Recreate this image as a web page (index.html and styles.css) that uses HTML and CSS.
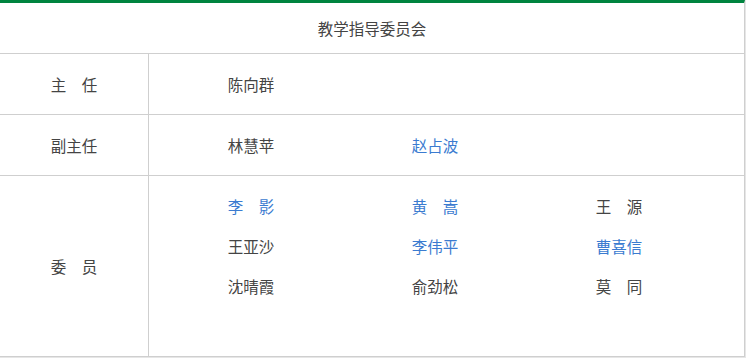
FILE: index.html
```html
<!DOCTYPE html>
<html lang="zh-CN">
<head>
    <meta charset="UTF-8">
    <meta name="viewport" content="width=device-width, initial-scale=1.0">
    <title>教学指导委员会</title>
    <link rel="stylesheet" href="styles.css">
</head>
<body>
    <div class="committee">
        <div class="title">教学指导委员会</div>

        <div class="row row-single">
            <div class="label">主　任</div>
            <div class="names">
                <span>陈向群</span>
            </div>
        </div>

        <div class="row row-single">
            <div class="label">副主任</div>
            <div class="names">
                <span>林慧苹</span>
                <a href="#">赵占波</a>
            </div>
        </div>

        <div class="row row-members">
            <div class="label">委　员</div>
            <div class="names">
                <a href="#">李　影</a>
                <a href="#">黄　嵩</a>
                <span>王　源</span>
                <span>王亚沙</span>
                <a href="#">李伟平</a>
                <a href="#">曹喜信</a>
                <span>沈晴霞</span>
                <span>俞劲松</span>
                <span>莫　同</span>
            </div>
        </div>
    </div>
</body>
</html>
```

FILE: styles.css
```css
* {
    margin: 0;
    padding: 0;
    box-sizing: border-box;
}

body {
    font-family: "Microsoft YaHei", "Noto Sans CJK SC", sans-serif;
    font-size: 15.5px;
    color: #444;
    background: #e6e6e6;
}

.committee {
    width: 745px;
    background: white;
    border-top: 3px solid #00843f;
    border-right: 1px solid #cfcfcf;
    border-bottom: 1px solid #cfcfcf;
}

.title {
    height: 51px;
    line-height: 50px;
    text-align: center;
    border-bottom: 1px solid #cfcfcf;
}

.row {
    display: grid;
    grid-template-columns: 149px 1fr;
    border-bottom: 1px solid #cfcfcf;
}

.row:last-child {
    border-bottom: none;
}

.label {
    display: flex;
    align-items: center;
    justify-content: center;
    border-right: 1px solid #cfcfcf;
}

.names {
    display: grid;
    grid-template-columns: repeat(3, 184px);
    padding-left: 10px;
    text-align: center;
}

.names a {
    color: #3b7bd0;
    text-decoration: none;
}

.row-single {
    height: 61px;
}

.row-single .names {
    line-height: 60px;
}

.row-members {
    height: 180px;
}

.row-members .names {
    padding-top: 10px;
    line-height: 40px;
    align-content: start;
}
```
